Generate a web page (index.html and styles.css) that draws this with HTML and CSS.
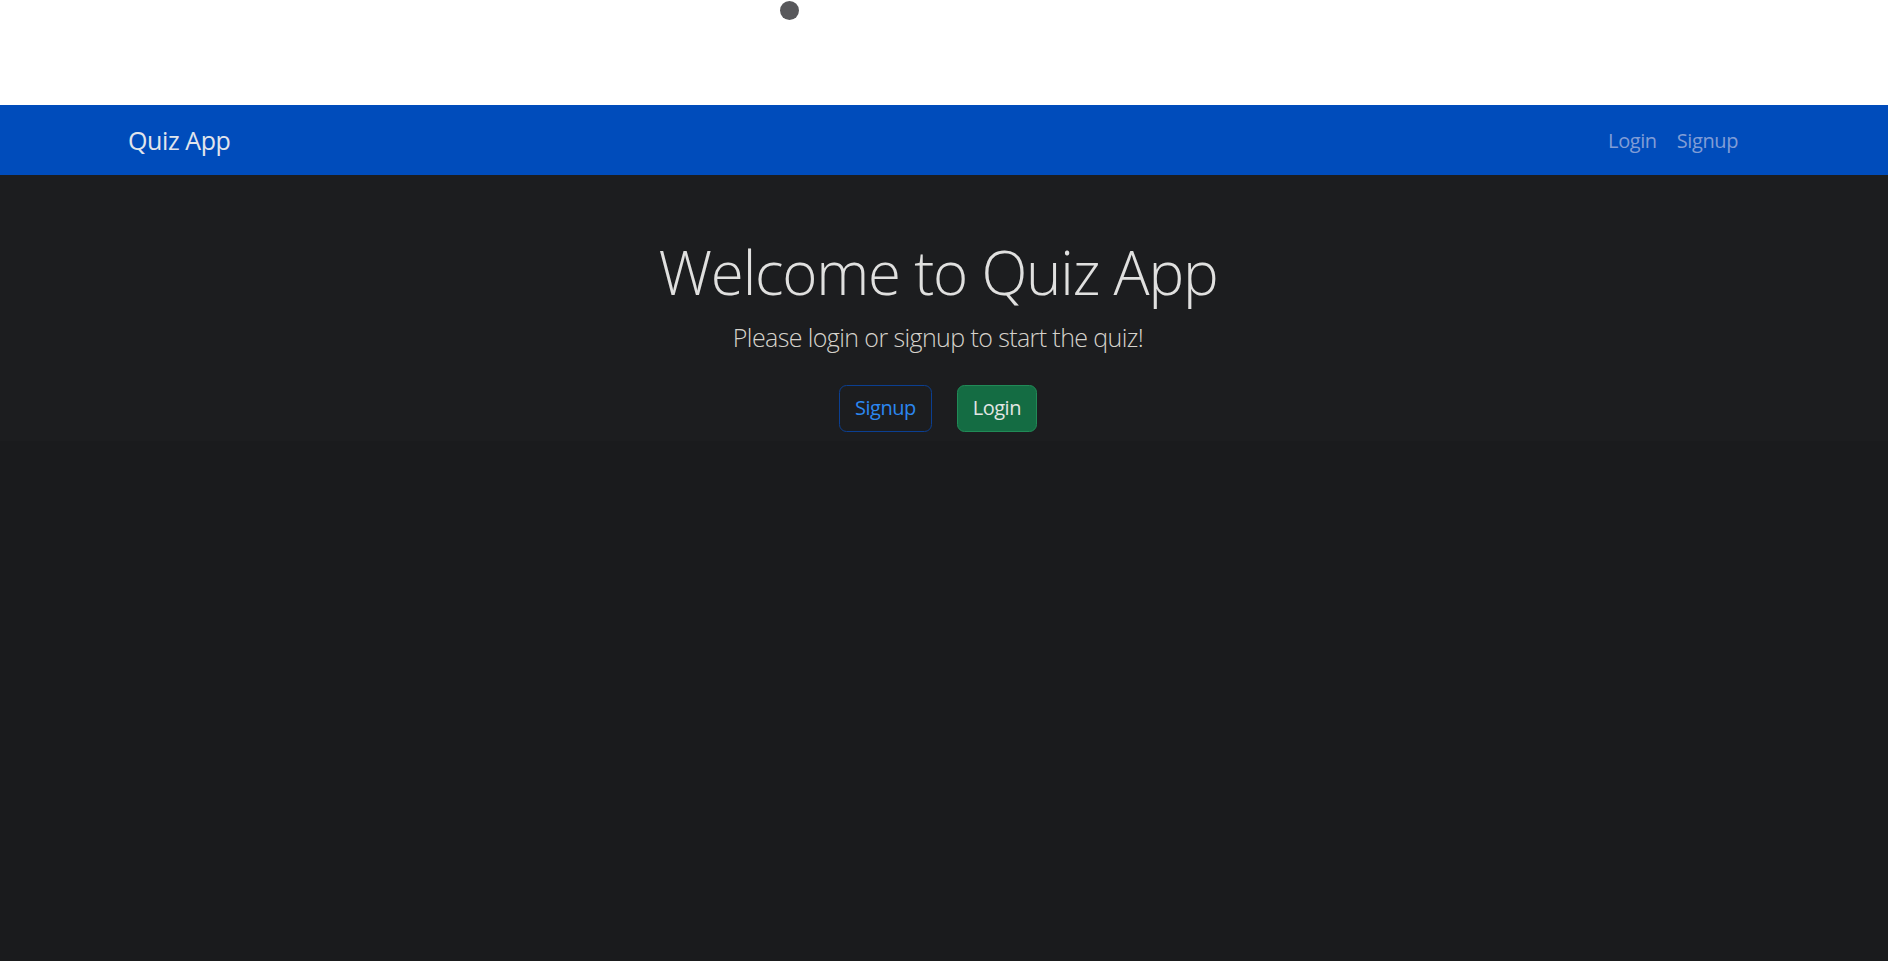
FILE: index.html
```html
<!DOCTYPE html>
<html lang="en">
<head>
<meta charset="utf-8">
<title>Quiz App</title>
<link rel="stylesheet" href="styles.css">
</head>
<body>
<div class="topstrip">
  <span class="dot"></span>
</div>
<nav class="navbar">
  <div class="container nav-inner">
    <a class="brand" href="#">Quiz App</a>
    <ul class="nav-links">
      <li><a href="#">Login</a></li>
      <li><a href="#">Signup</a></li>
    </ul>
  </div>
</nav>
<section class="hero">
  <h1 class="hero-title">Welcome to Quiz App</h1>
  <p class="hero-lead">Please login or signup to start the quiz!</p>
  <div class="hero-actions">
    <a class="btn btn-outline" href="#">Signup</a>
    <a class="btn btn-success" href="#">Login</a>
  </div>
</section>
<main class="page-rest"></main>
</body>
</html>
```
FILE: styles.css
```css
* { box-sizing: border-box; }
html, body { margin: 0; padding: 0; }
body {
  background: #1a1b1d;
  font-family: "Open Sans", "Noto Sans", sans-serif;
  color: #dee2e6;
  min-height: 961px;
}
a { text-decoration: none; }

.topstrip {
  position: relative;
  height: 105px;
  background: #ffffff;
}
.dot {
  position: absolute;
  left: 780px;
  top: 1px;
  width: 19px;
  height: 19px;
  border-radius: 50%;
  background: #58585b;
}

.navbar {
  background: #004cbb;
  height: 70px;
  padding-right: 12px;
}
.container {
  width: 1650px;
  margin: 0 auto;
  padding: 0 15px;
}
.nav-inner {
  height: 100%;
  display: flex;
  align-items: center;
  justify-content: space-between;
}
.brand {
  color: #e1e5ec;
  font-size: 25px;
  line-height: 37px;
  letter-spacing: -0.4px;
}
.nav-links {
  list-style: none;
  margin: 0;
  padding: 2px 0 0;
  display: flex;
}
.nav-links a {
  display: block;
  padding: 8px 10px;
  color: #809dd6;
  font-size: 20px;
  line-height: 30px;
  letter-spacing: -0.4px;
}

.hero {
  background: #1c1d1f;
  text-align: center;
  padding: 61px 12px 9px 0;
}
.hero-title {
  margin: 0;
  font-size: 60px;
  line-height: 72px;
  font-weight: 300;
  color: #e0e0df;
  letter-spacing: -1.2px;
}
.hero-lead {
  margin: 11px 0 28px;
  font-size: 25px;
  line-height: 37.5px;
  font-weight: 300;
  color: #d6d3cc;
  letter-spacing: -0.6px;
}
.hero-actions {
  display: flex;
  justify-content: center;
  gap: 25px;
}
.btn {
  display: inline-block;
  font-size: 20px;
  line-height: 30px;
  padding: 7.5px 15px;
  border: 1px solid transparent;
  border-radius: 7.5px;
  letter-spacing: -0.5px;
}
.btn-outline {
  color: #2b87f0;
  border-color: #0b3f91;
}
.btn-success {
  color: #e3e6e4;
  background: #146c43;
  border-color: #218a57;
}
.page-rest {
  min-height: 520px;
}
```
